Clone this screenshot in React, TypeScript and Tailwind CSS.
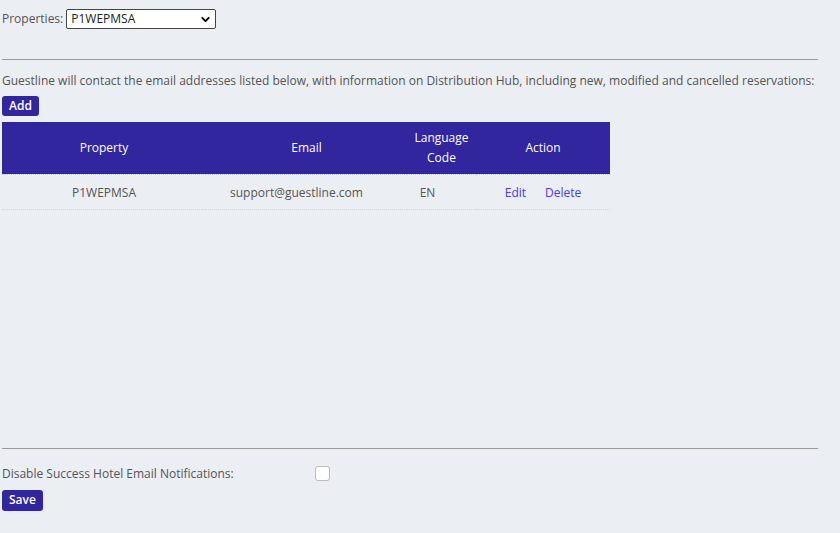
import { ChevronDown } from "lucide-react";

const rows = [{ property: "P1WEPMSA", email: "support@guestline.com", lang: "EN" }];

function App() {
  return (
    <div className="min-h-screen w-[840px] h-[533px] bg-[#ebeef3] text-[#555] text-[12px] font-['Open_Sans','Liberation_Sans',sans-serif] flex flex-col">
      <div className="flex items-center gap-[3px] pl-[2px] pt-[9px]">
        <span>Properties:</span>
        <div className="relative w-[150px] h-[20px] bg-white border border-[#444] rounded-[2px] flex items-center pl-[4px] text-[#222]">
          P1WEPMSA
          <ChevronDown className="absolute right-[3px] top-[3px] w-[13px] h-[13px] text-black" strokeWidth={3.5} />
        </div>
      </div>

      <hr className="mt-[30px] ml-[2px] w-[816px] border-t border-[#999]" />

      <p className="pl-[2px] mt-[13px] leading-[16px] whitespace-nowrap">
        Guestline will contact the email addresses listed below, with information on Distribution Hub, including new, modified and cancelled reservations:
      </p>

      <div className="pl-[2px] mt-[7px]">
        <button className="h-[20px] px-[7px] rounded-[3px] bg-[#32269e] text-white text-[12px] font-semibold">Add</button>
      </div>

      <table className="ml-[2px] mt-[6px] w-[608px] border-collapse text-center table-fixed">
        <thead>
          <tr className="bg-[#32269e] text-white h-[52px] border-b border-dotted border-[#c8c6e6]">
            <th className="w-[204px] font-normal">Property</th>
            <th className="w-[201px] font-normal">Email</th>
            <th className="w-[69px] font-normal leading-[20px]">Language<br />Code</th>
            <th className="font-normal">Action</th>
          </tr>
        </thead>
        <tbody>
          {rows.map((r) => (
            <tr key={r.email} className="h-[35px] border-b border-dotted border-[#d6d8dc]">
              <td className="pt-[3px]">{r.property}</td>
              <td className="pt-[3px] pr-[20px]">{r.email}</td>
              <td className="pt-[3px] pr-[28px]">{r.lang}</td>
              <td className="pt-[3px]">
                <div className="flex justify-center gap-[19px] text-[#4b3be6]">
                  <a href="#">Edit</a>
                  <a href="#">Delete</a>
                </div>
              </td>
            </tr>
          ))}
        </tbody>
      </table>

      <hr className="mt-[238px] ml-[2px] w-[816px] border-t border-[#999]" />

      <div className="flex items-center pl-[2px] mt-[16px]">
        <span className="w-[313px]">Disable Success Hotel Email Notifications:</span>
        <span className="w-[15px] h-[15px] bg-white border border-[#bbb] rounded-[3px]" />
      </div>

      <div className="pl-[2px] mt-[7px]">
        <button className="h-[21px] px-[7px] rounded-[3px] bg-[#32269e] text-white text-[12px] font-semibold">Save</button>
      </div>
    </div>
  );
}

export default App;
